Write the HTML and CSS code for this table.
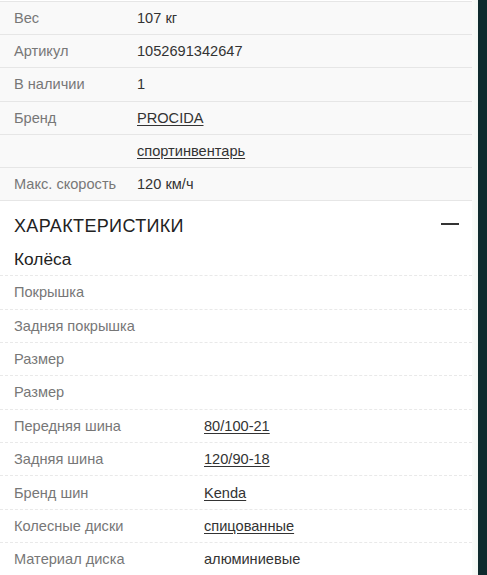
FILE: index.html
```html
<!DOCTYPE html>
<html lang="ru">
<head>
<meta charset="utf-8">
<title>Характеристики</title>
<link rel="stylesheet" href="styles.css">
</head>
<body>
<div class="page">
  <main class="content">
    <table class="props">
      <tr><td class="k">Вес</td><td class="v">107 кг</td></tr>
      <tr><td class="k">Артикул</td><td class="v">1052691342647</td></tr>
      <tr><td class="k">В наличии</td><td class="v">1</td></tr>
      <tr><td class="k">Бренд</td><td class="v"><a href="#">PROCIDA</a></td></tr>
      <tr><td class="k"></td><td class="v"><a href="#">спортинвентарь</a></td></tr>
      <tr><td class="k">Макс. скорость</td><td class="v">120 км/ч</td></tr>
    </table>

    <section class="specs">
      <div class="specs-head">
        <h2 class="specs-title">Характеристики</h2>
        <span class="minus"></span>
      </div>
      <h3 class="group">Колёса</h3>
      <div class="spec-list">
        <div class="row"><span class="sk">Покрышка</span><span class="sv"></span></div>
        <div class="row"><span class="sk">Задняя покрышка</span><span class="sv"></span></div>
        <div class="row"><span class="sk">Размер</span><span class="sv"></span></div>
        <div class="row"><span class="sk">Размер</span><span class="sv"></span></div>
        <div class="row"><span class="sk">Передняя шина</span><span class="sv"><a href="#">80/100-21</a></span></div>
        <div class="row"><span class="sk">Задняя шина</span><span class="sv"><a href="#">120/90-18</a></span></div>
        <div class="row"><span class="sk">Бренд шин</span><span class="sv"><a href="#">Kenda</a></span></div>
        <div class="row"><span class="sk">Колесные диски</span><span class="sv"><a href="#">спицованные</a></span></div>
        <div class="row"><span class="sk">Материал диска</span><span class="sv">алюминиевые</span></div>
      </div>
    </section>
  </main>
  <div class="gutter"></div>
  <div class="edge"></div>
</div>
</body>
</html>
```

FILE: styles.css
```css
html, body {
  margin: 0;
  padding: 0;
  height: 100%;
  overflow: hidden;
}
body {
  font-family: "Liberation Sans", Arial, sans-serif;
  background: #ffffff;
  color: #333;
}
.page {
  display: flex;
  height: 575px;
}
.content {
  width: 472px;
  flex: none;
  background: #fff;
  padding-top: 1px;
}
.gutter {
  width: 6px;
  flex: none;
  background: linear-gradient(to right, #fafcfa, #f3f8f4);
}
.edge {
  flex: 1;
  background: #0e2a2d;
}

.props {
  width: 100%;
  border-collapse: collapse;
  border-top: 1px solid #e6e6e6;
  font-size: 14.6px;
}
.props tr {
  background: #f9f9f9;
  border-bottom: 1px solid #e6e6e6;
}
.props td {
  height: 32.2px;
  padding: 0;
  vertical-align: middle;
}
.props .k {
  width: 123px;
  padding-left: 14px;
  color: #777;
}
.props .v {
  color: #333;
}
.props a, .spec-list a {
  color: #333;
  text-decoration: underline;
  text-underline-offset: 2px;
}

.specs-head {
  display: flex;
  align-items: center;
  justify-content: space-between;
  padding: 0 13px 0 14px;
  height: 50px;
}
.specs-title {
  margin: 0;
  font-size: 18px;
  font-weight: normal;
  text-transform: uppercase;
  color: #222;
  letter-spacing: 0.35px;
}
.minus {
  width: 18px;
  height: 1.5px;
  background: #333;
  margin-top: -4px;
}
.group {
  margin: 0;
  padding: 0 14px;
  font-size: 17.3px;
  font-weight: normal;
  color: #222;
  height: 24px;
  line-height: 16px;
  border-bottom: 1px dashed #e9e9e9;
}
.row {
  display: flex;
  align-items: center;
  height: 32.4px;
  border-bottom: 1px dashed #e9e9e9;
  font-size: 14.6px;
}
.sk {
  width: 190px;
  padding-left: 14px;
  color: #777;
}
.sv {
  color: #333;
}
```
